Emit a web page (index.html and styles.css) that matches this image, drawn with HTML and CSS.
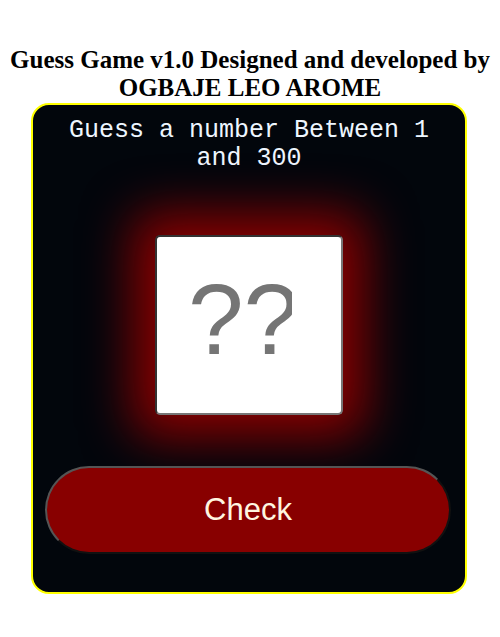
FILE: index.html
```html
<!DOCTYPE html>
<html>
<head>
<meta charset="utf-8">
<link rel="stylesheet" href="styles.css">
</head>
<body>
<h1 class="title">Guess Game v1.0 Designed and developed by OGBAJE LEO AROME</h1>
<div class="card">
  <p class="prompt">Guess a number Between 1 and 300</p>
  <div class="guess-box"><span class="guess-text">??</span></div>
  <button class="check-btn">Check</button>
</div>
</body>
</html>
```
FILE: styles.css
```css
body {
  margin: 8px;
  font-family: "Liberation Serif", serif;
  background: #fff;
}
.title {
  font-size: 25px;
  font-weight: bold;
  text-align: center;
  margin: 38px 0 1px;
  line-height: 28px;
}
.card {
  box-sizing: border-box;
  width: 436px;
  margin-left: 23px;
  background: #02060c;
  border: 2px solid #ffff00;
  border-radius: 18px;
  padding: 12px 0 38px;
  display: flex;
  flex-direction: column;
  align-items: center;
}
.prompt {
  margin: 0;
  font-family: "Liberation Mono", monospace;
  font-size: 25px;
  line-height: 28px;
  color: #eef6ff;
  text-align: center;
  padding: 0 20px;
}
.guess-box {
  box-sizing: border-box;
  width: 188px;
  height: 180px;
  margin-top: 62px;
  background: #fff;
  border: 2px solid;
  border-color: #333 #777 #777 #333;
  border-radius: 5px;
  box-shadow: 0 0 50px 22px #8a0000;
  display: flex;
  align-items: center;
  padding-left: 31px;
  padding-bottom: 12px;
}
.guess-text {
  display: block;
  width: 104px;
  overflow: hidden;
  white-space: nowrap;
  font-family: "Liberation Sans", sans-serif;
  font-size: 100px;
  line-height: 110px;
  color: #757575;
}
.check-btn {
  box-sizing: border-box;
  width: 406px;
  height: 88px;
  margin-top: 51px;
  margin-right: 2px;
  background: #880000;
  border: 2px solid;
  border-color: #555 #111 #111 #555;
  border-radius: 44px;
  color: #fff6e0;
  font-family: "Liberation Sans", sans-serif;
  font-size: 31px;
  padding: 0;
}
```
